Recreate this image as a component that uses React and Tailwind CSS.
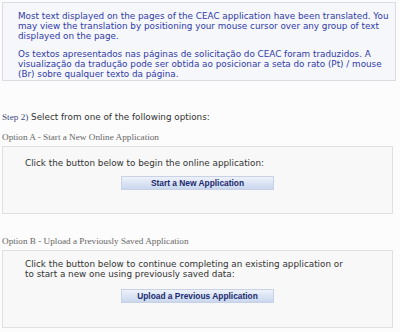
export default function App() {
  const sans = { fontFamily: '"DejaVu Sans", Verdana, sans-serif' };
  const serif = { fontFamily: '"Liberation Serif", "Times New Roman", serif' };
  const arial = { fontFamily: '"Liberation Sans", Arial, sans-serif' };
  const Btn = ({ children }) => (
    <div className="flex justify-center">
      <div
        className="w-[153px] h-[14px] flex items-center justify-center text-[8.4px] font-bold text-[#1c2a6e] bg-gradient-to-b from-[#eef2fa] to-[#c9d7ee] border border-[#c8d2e4]"
        style={arial}
      >
        {children}
      </div>
    </div>
  );
  return (
    <div className="w-[400px] h-[332px] bg-[#fcfcfc] overflow-hidden relative">
      <div className="pt-[2px] px-[2px]">
        <div
          className="w-[394px] h-[79px] bg-[#f6f7fb] border border-[#dcdde3] pl-[15px] pr-[6px] pt-[8px] text-[8.8px] leading-[10px] text-[#2f3aa8]"
          style={sans}
        >
          <p>
            Most text displayed on the pages of the CEAC application have been translated. You may view the translation by positioning your mouse cursor over any group of text displayed on the page.
          </p>
          <p className="mt-[8px]">
            Os textos apresentados nas páginas de solicitação do CEAC foram traduzidos. A visualização da tradução pode ser obtida ao posicionar a seta do rato (Pt) / mouse (Br) sobre qualquer texto da página.
          </p>
        </div>
      </div>
      <div className="mt-[31px] px-[2px] text-[8.8px] text-[#333] leading-[10px]" style={sans}>
        <span className="text-[#3c4a7a] text-[9.2px]" style={serif}>Step 2)</span> Select from one of the following options:
      </div>
      <div className="mt-[10px] px-[2px] text-[9.2px] text-[#666] leading-[10px]" style={serif}>
        Option A - Start a New Online Application
      </div>
      <div className="mt-[4px] mx-[2px] w-[391px] h-[68px] bg-[#f8f8f8] border border-[#e0e0e0] pt-[11px] text-[8.8px] leading-[10px] text-[#333]" style={sans}>
        <p className="pl-[22px]">Click the button below to begin the online application:</p>
        <div className="mt-[8px]">
          <Btn>Start a New Application</Btn>
        </div>
      </div>
      <div className="mt-[22px] px-[2px] text-[9.2px] text-[#666] leading-[10px]" style={serif}>
        Option B - Upload a Previously Saved Application
      </div>
      <div className="mt-[4px] mx-[2px] w-[391px] h-[78px] bg-[#f8f8f8] border border-[#e0e0e0] pt-[8px] text-[8.8px] leading-[10px] text-[#333]" style={sans}>
        <p className="pl-[22px]">Click the button below to continue completing an existing application or<br />to start a new one using previously saved data:</p>
        <div className="mt-[10px]">
          <Btn>Upload a Previous Application</Btn>
        </div>
      </div>
    </div>
  );
}
